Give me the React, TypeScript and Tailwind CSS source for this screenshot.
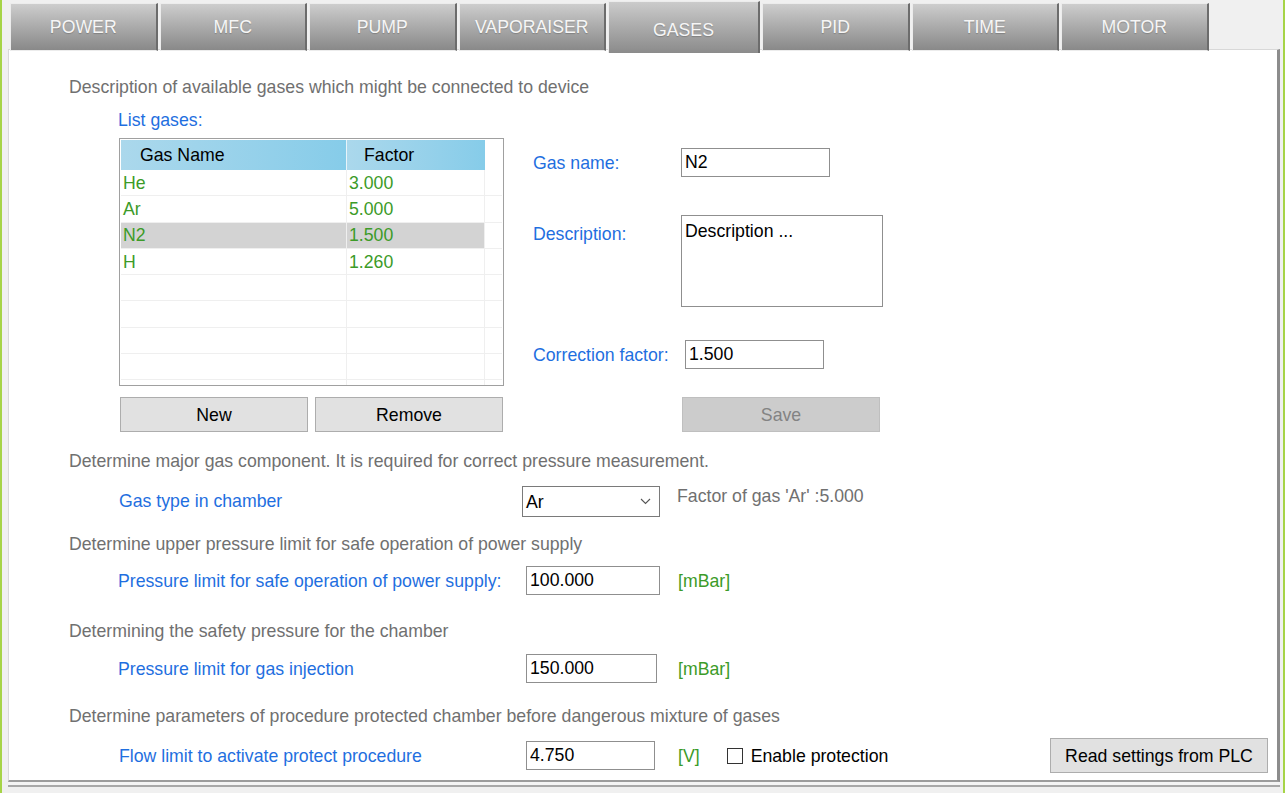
import React, { useState } from 'react';

const TABS = ['POWER', 'MFC', 'PUMP', 'VAPORAISER', 'GASES', 'PID', 'TIME', 'MOTOR'];

interface Gas {
  name: string;
  factor: string;
}

const GASES: Gas[] = [
  { name: 'He', factor: '3.000' },
  { name: 'Ar', factor: '5.000' },
  { name: 'N2', factor: '1.500' },
  { name: 'H', factor: '1.260' },
];

const inputCls =
  'h-[29px] border border-[#8f8f8f] bg-white px-[3px] text-black outline-none';

const App: React.FC = () => {
  const [selected, setSelected] = useState<number>(2);
  const [protect, setProtect] = useState<boolean>(false);

  const rows: (Gas | null)[] = [...GASES, null, null, null, null, null];

  return (
    <div className="w-[1285px] h-[793px] bg-[#f0f0f0] border-l-2 border-r-2 border-[#a6d447] font-['Liberation_Sans',Arial,sans-serif] text-[17.7px] leading-[20px] overflow-hidden">
      {/* Tabs */}
      <div className="flex items-start pl-[8px] pt-[3px] gap-[2px] h-[49px]">
        {TABS.map(tab => {
          const active = tab === 'GASES';
          return (
            <div
              key={tab}
              className={
                active
                  ? 'w-[152px] h-[52px] -mt-[2px] relative z-10 flex items-center justify-center pt-[4px] bg-linear-to-b from-[#cbcbcb] to-[#8b8b8b] border-t border-l border-[#ececec] border-r-2 border-r-[#6c6c6c] text-[#f6f6f6] [text-shadow:0_1px_1px_rgba(0,0,0,0.2)]'
                  : 'w-[147.5px] h-[48px] flex items-center justify-center bg-linear-to-b from-[#cdcdcd] to-[#898989] border-t border-l border-b border-[#ececec] border-r-2 border-r-[#6c6c6c] text-[#f6f6f6] [text-shadow:0_1px_1px_rgba(0,0,0,0.2)]'
              }
            >
              {tab}
            </div>
          );
        })}
      </div>

      {/* Panel */}
      <div className="ml-[6px] w-[1272px] h-[733px] bg-white border border-[#d8d8d8] border-r-[3px] border-r-[#8c8c8c] border-b-2 border-b-[#9c9c9c] shadow-[0_3px_0_#f4f4f4,0_5px_0_#a8a8a8]">
        <div className="flex flex-col pl-[60px] pt-[27px]">
          <div className="text-[#707070]">Description of available gases which might be connected to device</div>
          <div className="mt-[13px] ml-[49px] text-[#1f6fe0]">List gases:</div>

          <div className="mt-[8px] ml-[50px] flex">
            {/* Grid + buttons */}
            <div className="w-[385px] flex flex-col">
              <div className="h-[248px] border border-[#a0a0a0] p-[1px] overflow-hidden">
                <div className="flex h-[30px]">
                  <div className="w-[226px] border-r border-[#e8f4fa] bg-linear-to-r from-[#abd8ec] to-[#86cce9] pl-[19px] flex items-center text-black">Gas Name</div>
                  <div className="w-[138px] bg-linear-to-r from-[#abd8ec] to-[#86cce9] pl-[17px] flex items-center text-black">Factor</div>
                  <div className="flex-1 bg-white" />
                </div>
                {rows.map((g, i) => {
                  const sel = g !== null && i === selected;
                  return (
                    <div
                      key={i}
                      onClick={() => g && setSelected(i)}
                      className="flex h-[26.3px] border-b border-[#efefef] text-[#3c9b28]"
                    >
                      <div className={`w-[226px] border-r border-[#efefef] pl-[2px] flex items-center ${sel ? 'bg-[#d3d3d3]' : ''}`}>
                        {g?.name}
                      </div>
                      <div className={`w-[138px] border-r border-[#efefef] pl-[2px] flex items-center ${sel ? 'bg-[#d3d3d3]' : ''}`}>
                        {g?.factor}
                      </div>
                      <div className="flex-1" />
                    </div>
                  );
                })}
              </div>
              <div className="mt-[11px] flex">
                <button className="ml-[1px] w-[188px] h-[35px] bg-[#e1e1e1] border border-[#adadad] text-black">New</button>
                <button className="ml-[7px] w-[188px] h-[35px] bg-[#e1e1e1] border border-[#adadad] text-black">Remove</button>
              </div>
            </div>

            {/* Edit form */}
            <div className="ml-[29px] flex flex-col">
              <div className="mt-[10px] flex items-center h-[29px]">
                <div className="w-[148px] text-[#1f6fe0]">Gas name:</div>
                <input className={`${inputCls} w-[149px]`} defaultValue="N2" />
              </div>
              <div className="mt-[38px] flex items-start">
                <div className="w-[148px] mt-[9px] text-[#1f6fe0]">Description:</div>
                <textarea
                  className="w-[202px] h-[92px] border border-[#8f8f8f] px-[3px] py-[5px] resize-none outline-none text-black leading-[20px]"
                  defaultValue="Description ..."
                />
              </div>
              <div className="mt-[33px] flex items-center h-[29px]">
                <div className="w-[152px] text-[#1f6fe0]">Correction factor:</div>
                <input className={`${inputCls} w-[139px]`} defaultValue="1.500" />
              </div>
              <button
                disabled
                className="mt-[28px] ml-[149px] w-[198px] h-[35px] bg-[#cccccc] border border-[#bfbfbf] text-[#838383]"
              >
                Save
              </button>
            </div>
          </div>

          <div className="mt-[19px] text-[#707070]">Determine major gas component. It is required for correct pressure measurement.</div>
          <div className="mt-[15px] ml-[50px] flex items-start">
            <div className="w-[403px] leading-[31px] text-[#1f6fe0]">Gas type in chamber</div>
            <div className="w-[138px] h-[31px] border border-[#7a7a7a] bg-white flex items-center justify-between pl-[3px] pr-[8px] text-black">
              <span>Ar</span>
              <svg width="11" height="7" viewBox="0 0 11 7" fill="none">
                <path d="M1 1l4.5 4.5L10 1" stroke="#555" strokeWidth="1.1" />
              </svg>
            </div>
            <div className="ml-[17px] text-[#707070]">Factor of gas 'Ar' :5.000</div>
          </div>

          <div className="mt-[17px] text-[#707070]">Determine upper pressure limit for safe operation of power supply</div>
          <div className="mt-[12px] ml-[49px] flex items-center">
            <div className="w-[408px] text-[#1f6fe0]">Pressure limit for safe operation of power supply:</div>
            <input className={`${inputCls} w-[134px]`} defaultValue="100.000" />
            <div className="ml-[18px] text-[#3c9b28]">[mBar]</div>
          </div>

          <div className="mt-[26px] text-[#707070]">Determining the safety pressure for the chamber</div>
          <div className="mt-[13px] ml-[49px] flex items-center">
            <div className="w-[408px] text-[#1f6fe0]">Pressure limit for gas injection</div>
            <input className={`${inputCls} w-[131px]`} defaultValue="150.000" />
            <div className="ml-[21px] text-[#3c9b28]">[mBar]</div>
          </div>

          <div className="mt-[23px] text-[#707070]">Determine parameters of procedure protected chamber before dangerous mixture of gases</div>
          <div className="mt-[12px] ml-[50px] flex items-center pr-[9px]">
            <div className="w-[407px] text-[#1f6fe0]">Flow limit to activate protect procedure</div>
            <input className={`${inputCls} w-[129px]`} defaultValue="4.750" />
            <div className="ml-[23px] text-[#3c9b28]">[V]</div>
            <label className="ml-[27px] flex items-center text-black">
              <span
                onClick={() => setProtect(!protect)}
                className="w-[16px] h-[16px] border border-[#333] bg-white flex items-center justify-center text-[12px]"
              >
                {protect ? '✓' : ''}
              </span>
              <span className="ml-[8px]">Enable protection</span>
            </label>
            <button className="ml-auto w-[218px] h-[35px] bg-[#e1e1e1] border border-[#adadad] text-black">
              Read settings from PLC
            </button>
          </div>
        </div>
      </div>
    </div>
  );
};

export default App;
